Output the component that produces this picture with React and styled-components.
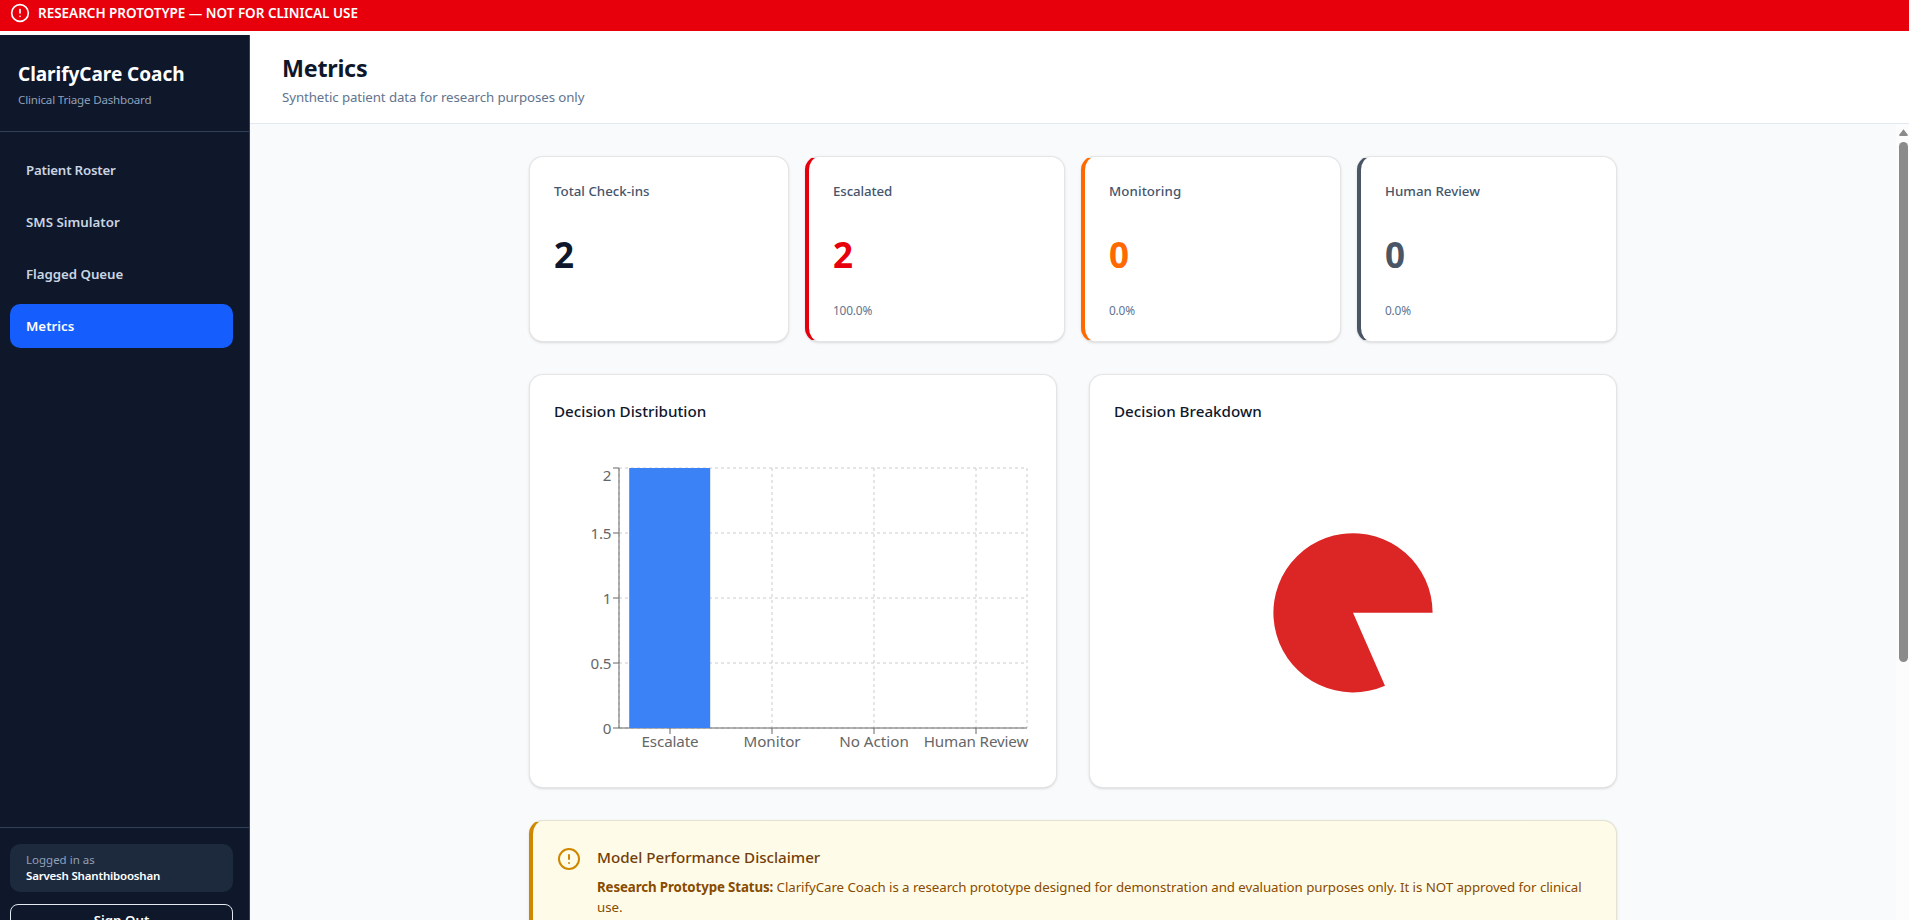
import React from 'react';
import styled, { createGlobalStyle, css } from 'styled-components';
import { CircleAlert } from 'lucide-react';

const Global = createGlobalStyle`
  *, *::before, *::after { box-sizing: border-box; }
  body {
    margin: 0;
    overflow: hidden;
    background: #fff;
    font-family: "Noto Sans", "Open Sans", sans-serif;
    color: #0f172b;
  }
  p, h1, h2, h3 { margin: 0; }
`;

const Page = styled.div`
  height: 920px;
  display: flex;
  flex-direction: column;
  overflow: hidden;
`;

const Banner = styled.div`
  flex: none;
  height: 31px;
  margin-bottom: 4px;
  padding: 0 10px 5px;
  display: flex;
  align-items: center;
  gap: 8px;
  background: #e7000b;
  color: #fff;
  font-size: 13.5px;
  line-height: 20px;
  font-weight: 600;
  letter-spacing: -0.02px;
`;

const Shell = styled.div`
  flex: 1;
  min-height: 0;
  display: flex;
`;

const Sidebar = styled.aside`
  flex: 0 0 250px;
  display: flex;
  flex-direction: column;
  background: #0f172b;
  border-right: 1px solid #314158;
`;

const Brand = styled.div`
  flex: none;
  height: 97px;
  padding: 25px 18px 0;
  border-bottom: 1px solid #314158;
`;

const BrandName = styled.h1`
  font-size: 19px;
  line-height: 28px;
  font-weight: 700;
  letter-spacing: -0.04px;
  color: #fff;
`;

const BrandTagline = styled.p`
  margin-top: 4px;
  font-size: 11.6px;
  line-height: 16px;
  letter-spacing: -0.2px;
  color: #90a1b9;
`;

const Nav = styled.nav`
  flex: 1;
  padding: 16px 16px 0 10px;
  display: flex;
  flex-direction: column;
  gap: 8px;
`;

const NavItem = styled.a`
  height: 44px;
  padding: 0 16px;
  display: flex;
  align-items: center;
  border-radius: 10px;
  font-size: 13.3px;
  font-weight: 600;
  letter-spacing: ${(p) => p.$track || 0}px;
  color: ${(p) => (p.$active ? '#fff' : '#cad5e2')};
  background: ${(p) => (p.$active ? '#155dfc' : 'transparent')};
`;

const SidebarFooter = styled.div`
  flex: 0 0 93px;
  overflow: hidden;
  padding: 16px 16px 0 10px;
  border-top: 1px solid #314158;
`;

const UserBox = styled.div`
  height: 48px;
  margin-bottom: 12px;
  padding: 8px 16px;
  border-radius: 10px;
  background: #1d293d;
  font-size: 11.5px;
  line-height: 16px;
`;

const UserCaption = styled.p`
  color: #90a1b9;
`;

const UserName = styled.p`
  font-weight: 600;
  letter-spacing: -0.198px;
  color: #fff;
`;

const SignOut = styled.button`
  width: 100%;
  height: 32px;
  padding: 0 0 1px;
  border: 1px solid #e2e8f0;
  border-radius: 8px;
  background: transparent;
  color: #fff;
  font: 600 13.3px/20px "Noto Sans", sans-serif;
`;

const Content = styled.div`
  flex: 1;
  min-width: 0;
  display: flex;
  flex-direction: column;
`;

const Header = styled.header`
  flex: none;
  height: 89px;
  padding: 17px 32px 0;
  background: #fff;
  border-bottom: 1px solid #e2e8f0;
`;

const PageTitle = styled.h2`
  font-size: 23.3px;
  line-height: 32px;
  font-weight: 700;
  letter-spacing: -0.25px;
`;

const PageSubtitle = styled.p`
  margin-top: 3px;
  font-size: 13.3px;
  line-height: 20px;
  letter-spacing: -0.1px;
  color: #62748e;
`;

const Viewport = styled.div`
  flex: 1;
  min-height: 0;
  display: flex;
  background: #f8fafc;
`;

const Main = styled.main`
  flex: 1;
  min-width: 0;
  overflow: hidden;
  padding-top: 32px;
`;

const Scrollbar = styled.div`
  flex: 0 0 13px;
  padding: 5px 1px 0 3px;
  display: flex;
  flex-direction: column;
  gap: 6px;
  background: #fcfcfc;
`;

const ScrollArrow = styled.svg`
  flex: none;
  display: block;
  width: 9px;
  height: 7px;
  fill: #8b8b8b;
`;

const ScrollThumb = styled.div`
  flex: none;
  height: 520px;
  border-radius: 5px;
  background: #8b8b8b;
`;

const Column = styled.div`
  width: 1088px;
  margin: 0 auto;
  display: flex;
  flex-direction: column;
  gap: 32px;
`;

const StatGrid = styled.div`
  display: grid;
  grid-template-columns: repeat(4, 1fr);
  gap: 16px;
`;

const ChartGrid = styled.div`
  display: grid;
  grid-template-columns: repeat(2, 1fr);
  gap: 32px;
`;

const Card = styled.section`
  padding: 24px;
  border: 1px solid rgba(0, 0, 0, 0.1);
  ${(p) => p.$accent && css`border-left: 4px solid ${p.$accent};`}
  border-radius: 14px;
  background: ${(p) => p.$fill || '#fff'};
  box-shadow: 0 1px 3px rgba(0, 0, 0, 0.1), 0 1px 2px -1px rgba(0, 0, 0, 0.1);
`;

const StatCard = styled(Card)`
  height: 186px;
`;

const StatLabel = styled.h3`
  font-size: 13.3px;
  line-height: 20px;
  font-weight: 500;
  letter-spacing: ${(p) => p.$track || 0}px;
  color: #45556c;
`;

const StatValue = styled.p`
  margin-top: 34px;
  font-size: 35px;
  line-height: 40px;
  font-weight: 700;
  color: ${(p) => p.$color};
`;

const StatShare = styled.p`
  margin-top: 27px;
  font-size: 11.9px;
  line-height: 16px;
  letter-spacing: -0.2px;
  color: #62748e;
`;

const ChartCard = styled(Card)`
  height: 414px;
`;

const ChartTitle = styled.h3`
  margin-bottom: 40px;
  font-size: 15.2px;
  line-height: 24px;
  font-weight: 500;
`;

const Chart = styled.svg`
  display: block;
  width: 478px;
  height: 300px;
  font-size: 15.2px;
`;

const Notice = styled(Card)`
  height: 180px;
  display: flex;
  gap: 16px;
`;

const NoticeIcon = styled.div`
  flex: none;
  width: 24px;
  padding-top: 2px;
  color: #d08700;
`;

const NoticeTitle = styled.h3`
  margin-bottom: 8px;
  font-size: 15.2px;
  line-height: 24px;
  font-weight: 500;
  letter-spacing: -0.03px;
  color: #733e0a;
`;

const NoticeText = styled.p`
  font-size: 13.3px;
  line-height: 20px;
  letter-spacing: -0.06px;
  color: #894b00;
  strong { font-weight: 700; letter-spacing: -0.12px; }
`;

const navItems = [
  { label: 'Patient Roster', track: -0.209 },
  { label: 'SMS Simulator', track: 0 },
  { label: 'Flagged Queue', track: -0.051 },
  { label: 'Metrics', track: 0, active: true },
];

const stats = [
  { label: 'Total Check-ins', value: 2, color: '#0f172b' },
  { label: 'Escalated', value: 2, share: '100.0%', color: '#e7000b', accent: '#e7000b', track: -0.116 },
  { label: 'Monitoring', value: 0, share: '0.0%', color: '#ff6900', accent: '#ff6900', track: 0.1 },
  { label: 'Human Review', value: 0, share: '0.0%', color: '#4a5565', accent: '#4a5565', track: 0.02 },
];

const bars = [
  { label: 'Escalate', count: 2, track: -0.15 },
  { label: 'Monitor', count: 0, track: 0 },
  { label: 'No Action', count: 0, track: 0 },
  { label: 'Human Review', count: 0, track: -0.145 },
];
const ticks = [0, 0.5, 1, 1.5, 2];
const plot = { left: 65, right: 473, top: 5, bottom: 265 };
const band = (plot.right - plot.left) / bars.length;
const yOf = (v) => plot.bottom - (v / 2) * (plot.bottom - plot.top);
const xOf = (i) => plot.left + band * (i + 0.5);

function BarChart() {
  return (
    <Chart viewBox="0 0 478 300">
      <g stroke="#ccc" strokeDasharray="3 3">
        {ticks.map((t) => (
          <line key={t} x1={plot.left} x2={plot.right} y1={yOf(t)} y2={yOf(t)} />
        ))}
        {[...bars.map((_, i) => xOf(i)), plot.left, plot.right].map((x) => (
          <line key={x} x1={x} x2={x} y1={plot.top} y2={plot.bottom} />
        ))}
      </g>
      <g stroke="#666">
        <line x1={plot.left} x2={plot.right} y1={plot.bottom} y2={plot.bottom} />
        <line x1={plot.left} x2={plot.left} y1={plot.top} y2={plot.bottom} />
        {bars.map((b, i) => (
          <line key={b.label} x1={xOf(i)} x2={xOf(i)} y1={plot.bottom} y2={plot.bottom + 6} />
        ))}
        {ticks.map((t) => (
          <line key={t} x1={plot.left - 6} x2={plot.left} y1={yOf(t)} y2={yOf(t)} />
        ))}
      </g>
      <g fill="#666">
        {bars.map((b, i) => (
          <text key={b.label} x={xOf(i)} y={284} textAnchor="middle" letterSpacing={b.track}>
            {b.label}
          </text>
        ))}
        {ticks.map((t) => (
          <text key={t} x={plot.left - 8} y={t === 2 ? 18 : yOf(t) + 6} textAnchor="end" letterSpacing="-0.35">
            {t}
          </text>
        ))}
      </g>
      {bars.map((b, i) => (
        <rect
          key={b.label}
          x={plot.left + band * i + band * 0.1}
          y={yOf(b.count)}
          width={81}
          height={plot.bottom - yOf(b.count)}
          fill="#3b82f6"
        />
      ))}
    </Chart>
  );
}

function PieChart() {
  const angle = (66.3 * Math.PI) / 180;
  const cx = 239;
  const cy = 149.8;
  const r = 79.6;
  const x = cx + r * Math.cos(angle);
  const y = cy + r * Math.sin(angle);
  return (
    <Chart viewBox="0 0 478 300">
      <path d={`M${cx},${cy} L${cx + r},${cy} A${r},${r} 0 1 0 ${x},${y} Z`} fill="#dc2626" />
    </Chart>
  );
}

export default function App() {
  return (
    <Page>
      <Global />
      <Banner>
        <CircleAlert size={20} />
        <span>RESEARCH PROTOTYPE — NOT FOR CLINICAL USE</span>
      </Banner>
      <Shell>
        <Sidebar>
          <Brand>
            <BrandName>ClarifyCare Coach</BrandName>
            <BrandTagline>Clinical Triage Dashboard</BrandTagline>
          </Brand>
          <Nav>
            {navItems.map((n) => (
              <NavItem key={n.label} $active={n.active} $track={n.track}>
                {n.label}
              </NavItem>
            ))}
          </Nav>
          <SidebarFooter>
            <UserBox>
              <UserCaption>Logged in as</UserCaption>
              <UserName>Sarvesh Shanthibooshan</UserName>
            </UserBox>
            <SignOut>Sign Out</SignOut>
          </SidebarFooter>
        </Sidebar>
        <Content>
          <Header>
            <PageTitle>Metrics</PageTitle>
            <PageSubtitle>Synthetic patient data for research purposes only</PageSubtitle>
          </Header>
          <Viewport>
            <Main>
              <Column>
                <StatGrid>
                  {stats.map((s) => (
                    <StatCard key={s.label} $accent={s.accent}>
                      <StatLabel $track={s.track}>{s.label}</StatLabel>
                      <StatValue $color={s.color}>{s.value}</StatValue>
                      {s.share && <StatShare>{s.share}</StatShare>}
                    </StatCard>
                  ))}
                </StatGrid>
                <ChartGrid>
                  <ChartCard>
                    <ChartTitle>Decision Distribution</ChartTitle>
                    <BarChart />
                  </ChartCard>
                  <ChartCard>
                    <ChartTitle>Decision Breakdown</ChartTitle>
                    <PieChart />
                  </ChartCard>
                </ChartGrid>
                <Notice $accent="#d08700" $fill="#fefce8">
                  <NoticeIcon>
                    <CircleAlert size={24} />
                  </NoticeIcon>
                  <div>
                    <NoticeTitle>Model Performance Disclaimer</NoticeTitle>
                    <NoticeText>
                      <strong>Research Prototype Status:</strong> ClarifyCare Coach is a research prototype
                      designed for demonstration and evaluation purposes only. It is NOT approved for clinical
                      use.
                    </NoticeText>
                  </div>
                </Notice>
              </Column>
            </Main>
            <Scrollbar>
              <ScrollArrow viewBox="0 0 9 7">
                <path d="M4.5 0.3 L8.8 5.8 Q9 7 8 7 H1 Q0 7 0.2 5.8 Z" />
              </ScrollArrow>
              <ScrollThumb />
            </Scrollbar>
          </Viewport>
        </Content>
      </Shell>
    </Page>
  );
}
